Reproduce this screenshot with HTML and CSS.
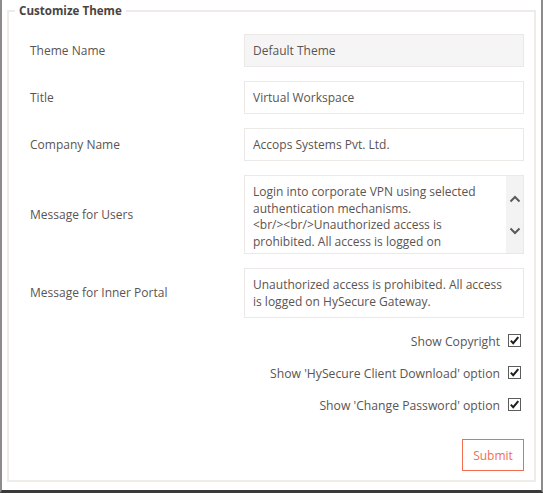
FILE: index.html
```html
<!DOCTYPE html>
<html>
<head>
<meta charset="utf-8">
<link rel="stylesheet" href="styles.css">
</head>
<body>
<div class="frame">
  <fieldset class="panel">
    <legend class="panel-title">Customize Theme</legend>
    <div class="form">
      <label class="lbl">Theme Name</label>
      <input class="field readonly" type="text" value="Default Theme" readonly>

      <label class="lbl">Title</label>
      <input class="field" type="text" value="Virtual Workspace">

      <label class="lbl">Company Name</label>
      <input class="field" type="text" value="Accops Systems Pvt. Ltd.">

      <label class="lbl">Message for Users</label>
      <div class="area area-users">
        <div class="area-text">Login into corporate VPN using selected<br>authentication mechanisms.<br>&lt;br/&gt;&lt;br/&gt;Unauthorized access is<br>prohibited. All access is logged on<br>HySecure Gateway.</div>
        <div class="scrollbar">
          <svg class="chev" width="12" height="8" viewBox="0 0 12 8"><path d="M1.5 6.5 L6 2 L10.5 6.5" fill="none" stroke="#5a5a5a" stroke-width="2"/></svg>
          <svg class="chev" width="12" height="8" viewBox="0 0 12 8"><path d="M1.5 1.5 L6 6 L10.5 1.5" fill="none" stroke="#5a5a5a" stroke-width="2"/></svg>
        </div>
      </div>

      <label class="lbl">Message for Inner Portal</label>
      <div class="area area-portal">
        <div class="area-text">Unauthorized access is prohibited. All access<br>is logged on HySecure Gateway.</div>
      </div>
    </div>

    <div class="checks">
      <div class="check-row"><span>Show Copyright</span>
        <svg class="cb" width="13" height="13" viewBox="0 0 13 13"><rect x="0.5" y="0.5" width="12" height="12" fill="#fff" stroke="#5c5c5c"/><path d="M2.8 6.6 L5.2 9.2 L10.3 3.2" fill="none" stroke="#1e1e1e" stroke-width="2"/></svg>
      </div>
      <div class="check-row"><span>Show 'HySecure Client Download' option</span>
        <svg class="cb" width="13" height="13" viewBox="0 0 13 13"><rect x="0.5" y="0.5" width="12" height="12" fill="#fff" stroke="#5c5c5c"/><path d="M2.8 6.6 L5.2 9.2 L10.3 3.2" fill="none" stroke="#1e1e1e" stroke-width="2"/></svg>
      </div>
      <div class="check-row"><span>Show 'Change Password' option</span>
        <svg class="cb" width="13" height="13" viewBox="0 0 13 13"><rect x="0.5" y="0.5" width="12" height="12" fill="#fff" stroke="#5c5c5c"/><path d="M2.8 6.6 L5.2 9.2 L10.3 3.2" fill="none" stroke="#1e1e1e" stroke-width="2"/></svg>
      </div>
    </div>

    <div class="actions">
      <button class="submit" type="button">Submit</button>
    </div>
  </fieldset>
</div>
</body>
</html>
```

FILE: styles.css
```css
* { box-sizing: border-box; }
html, body { margin: 0; padding: 0; background: #fff; }
body {
  font-family: "Open Sans", "Liberation Sans", sans-serif;
  font-size: 12px;
  color: #5a5452;
}
.frame {
  width: 543px;
  height: 493px;
  border-left: 2px solid #8c8c8c;
  border-right: 2px solid #8c8c8c;
  border-bottom: 3px solid #3a3a3a;
  padding: 2px 5px 0;
  overflow: hidden;
}
.panel {
  margin: 0;
  border: 2px solid #efebe7;
  padding: 14px 10px 9px 6px;
  min-width: 0;
}
.panel-title {
  font-weight: bold;
  font-size: 11.6px;
  line-height: 18px;
  color: #4a4442;
  padding: 0 4px;
  margin-left: 0;
}
.form {
  display: grid;
  grid-template-columns: 1fr 280px;
  row-gap: 14px;
  align-items: center;
  padding-left: 15px;
}
.lbl { line-height: 16px; }
.field {
  display: block;
  width: 280px;
  height: 33px;
  border: 1px solid #ece8e5;
  padding: 0 8px;
  font-family: "Open Sans", "Liberation Sans", sans-serif;
  font-size: 12px;
  color: #5a5452;
  background: #fff;
  outline: none;
  margin: 0;
}
.field.readonly { background: #f6f5f5; }
.area {
  display: flex;
  width: 280px;
  border: 1px solid #ece8e5;
  overflow: hidden;
  line-height: 16.6px;
}
.area-users { height: 79px; }
.area-portal { height: 50px; line-height: 17px; }
.area-text {
  flex: 1;
  padding: 8px 8px 0;
  white-space: nowrap;
}
.area-portal .area-text { padding-top: 7px; }
.scrollbar {
  width: 17px;
  background: #f3f3f3;
  display: flex;
  flex-direction: column;
  align-items: center;
  padding-top: 19px;
  gap: 24px;
}
.chev { display: block; }
.checks {
  margin-top: 7px;
  display: flex;
  flex-direction: column;
  align-items: flex-end;
}
.check-row {
  height: 32px;
  display: flex;
  align-items: center;
  gap: 8px;
  padding-right: 3px;
  font-size: 12.2px;
}
.cb { display: block; margin-top: -1px; }
.actions {
  display: flex;
  justify-content: flex-end;
  margin-top: 18px;
}
.submit {
  width: 62px;
  height: 32px;
  border: 1px solid #f26d50;
  background: #fff;
  color: #f26d50;
  font-family: "Open Sans", "Liberation Sans", sans-serif;
  font-size: 12px;
  padding: 0;
  margin: 0;
}
```
